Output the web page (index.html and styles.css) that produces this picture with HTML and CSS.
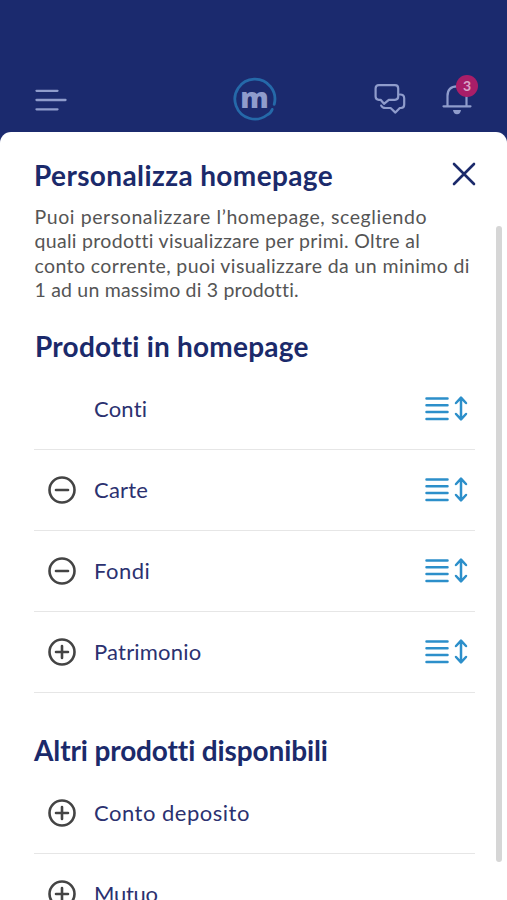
FILE: index.html
```
<!DOCTYPE html>
<html lang="it">
<head>
  <meta charset="UTF-8">
  <meta name="viewport" content="width=device-width, initial-scale=1.0">
  <title>Personalizza homepage</title>
  <link rel="stylesheet" href="styles.css">
</head>
<body>
  <!-- Shared icons -->
  <svg class="icon-defs" aria-hidden="true">
    <symbol id="minus" viewBox="0 0 28 28">
      <circle cx="14" cy="14" r="12.5"/>
      <path d="M8 14h12"/>
    </symbol>
    <symbol id="plus" viewBox="0 0 28 28">
      <circle cx="14" cy="14" r="12.5"/>
      <path d="M8 14h12M14 8v12"/>
    </symbol>
    <symbol id="drag" viewBox="0 0 44 28">
      <path d="M1.5 3.5h21M1.5 10.3h21M1.5 17.1h21M1.5 23.9h21"/>
      <path d="M36 3v21M31 8l5-5.3 5 5.3M31 19l5 5.3 5-5.3"/>
    </symbol>
  </svg>

  <header class="topbar">
    <button class="icon-btn" aria-label="Menu">
      <svg class="menu-icon" viewBox="0 0 32 24">
        <path d="M1.5 2.8h21M1.5 12h29M1.5 21.3h21"/>
      </svg>
    </button>
    <div class="logo">
      <svg class="logo-ring" viewBox="0 0 44 44">
        <path d="M41.2 27.3A20 20 0 1 0 34 38Q37.6 36.5 39.2 32.4"/>
      </svg>
      <span class="logo-letter">m</span>
    </div>
    <div class="actions">
      <button class="icon-btn" aria-label="Messaggi">
        <svg class="chat-icon" viewBox="0 0 32 32">
          <path d="M4.8 2.2H21Q24.2 2.2 24.2 5.4V13.6Q24.2 16.8 21 16.8H14.8L10 20.8 6.6 16.8H4.8Q1.6 16.8 1.6 13.6V5.4Q1.6 2.2 4.8 2.2Z"/>
          <path d="M25.8 11.5Q30.2 11.3 30.2 15.2V21.6Q30.2 25 27 25H25.8L21.4 29.6 16.6 25H11.5Q8.2 25 7.2 22.6"/>
        </svg>
      </button>
      <button class="icon-btn bell" aria-label="Notifiche">
        <svg class="bell-icon" viewBox="0 0 30 32">
          <path d="M1.5 23.3h27M5.5 23v-10Q5.5 3.4 15 3.4T24.5 13v10"/>
          <path class="clapper" d="M11 27h8q-.6 4.2-4 4.2T11 27Z"/>
        </svg>
        <span class="badge">3</span>
      </button>
    </div>
  </header>

  <main class="sheet">
    <div class="content">
      <div class="title-row">
        <h1>Personalizza homepage</h1>
        <button class="icon-btn" aria-label="Chiudi">
          <svg class="close-icon" viewBox="0 0 24 24">
            <path d="M2 2l20 20M22 2L2 22"/>
          </svg>
        </button>
      </div>
      <p class="intro">
        <span class="line line-1">Puoi personalizzare l’homepage, scegliendo</span>
        <span class="line line-2">quali prodotti visualizzare per primi. Oltre al</span>
        <span class="line line-3">conto corrente, puoi visualizzare da un minimo di</span>
        <span class="line line-4">1 ad un massimo di 3 prodotti.</span>
      </p>

      <h2 class="home-title">Prodotti in homepage</h2>
      <ul class="products">
        <li>
          <span class="toggle"></span>
          <span class="name">Conti</span>
          <svg class="drag"><use href="#drag"/></svg>
        </li>
        <li>
          <svg class="toggle"><use href="#minus"/></svg>
          <span class="name">Carte</span>
          <svg class="drag"><use href="#drag"/></svg>
        </li>
        <li>
          <svg class="toggle"><use href="#minus"/></svg>
          <span class="name name-wide">Fondi</span>
          <svg class="drag"><use href="#drag"/></svg>
        </li>
        <li>
          <svg class="toggle"><use href="#plus"/></svg>
          <span class="name">Patrimonio</span>
          <svg class="drag"><use href="#drag"/></svg>
        </li>
      </ul>

      <h2 class="other-title">Altri prodotti disponibili</h2>
      <ul class="products">
        <li>
          <svg class="toggle"><use href="#plus"/></svg>
          <span class="name name-wide">Conto deposito</span>
        </li>
        <li>
          <svg class="toggle"><use href="#plus"/></svg>
          <span class="name name-tight">Mutuo</span>
        </li>
      </ul>
    </div>
    <div class="scrollbar"></div>
  </main>
</body>
</html>
```
FILE: styles.css
```
* {
  box-sizing: border-box;
}

body {
  margin: 0;
  height: 900px;
  overflow: hidden;
  background: #1b2a6e;
  font-family: Lato, "Open Sans", sans-serif;
  color: #1b2a6b;
}

h1, h2, p, ul {
  margin: 0;
  padding: 0;
}

svg {
  display: block;
  fill: none;
  stroke-linecap: round;
  stroke-linejoin: round;
}

.icon-defs {
  position: absolute;
  width: 0;
  height: 0;
}

.icon-btn {
  display: block;
  padding: 0;
  border: none;
  background: none;
}

/* Top bar */
.topbar {
  display: grid;
  grid-template-columns: 1fr 44px 1fr;
  align-items: center;
  height: 132px;
  padding: 66px 34px 0 36px;
}

.topbar svg {
  stroke: #8f9ccc;
}

.topbar .menu-icon {
  width: 32px;
  height: 24px;
  margin: 2px 0 0 -1px;
  stroke-width: 2.3;
}

.logo {
  display: grid;
  place-items: center;
  width: 44px;
  height: 44px;
}

.logo > * {
  grid-area: 1 / 1;
}

.topbar .logo-ring {
  width: 44px;
  height: 44px;
  stroke: #2569a9;
  stroke-width: 2.8;
}

.logo-letter {
  margin-top: -5px;
  font-family: "Open Sans", sans-serif;
  font-size: 28.5px;
  font-weight: 800;
  line-height: 36px;
  color: #8f9ccc;
}

.actions {
  display: flex;
  justify-content: flex-end;
  gap: 36px;
  margin-right: 1px;
}

.chat-icon {
  width: 32px;
  height: 32px;
  stroke-width: 2.2;
}

.bell {
  position: relative;
}

.bell-icon {
  width: 30px;
  height: 32px;
  stroke-width: 2.2;
}

.bell-icon .clapper {
  fill: #8f9ccc;
  stroke: none;
}

.badge {
  position: absolute;
  top: -8px;
  right: -6px;
  width: 22px;
  height: 22px;
  border-radius: 50%;
  background: #a91e68;
  color: #d9a5c8;
  font-family: Lato, sans-serif;
  font-size: 14px;
  font-weight: 700;
  line-height: 22px;
  text-align: center;
}

/* Bottom sheet */
.sheet {
  display: flex;
  justify-content: space-between;
  height: 768px;
  padding: 0 5px 0 34px;
  overflow: hidden;
  border-radius: 11px 11px 0 0;
  background: #fff;
}

.content {
  width: 441px;
}

.title-row {
  display: flex;
  align-items: center;
  justify-content: space-between;
  height: 44px;
  margin-top: 20px;
}

h1, h2 {
  font-size: 28px;
  font-weight: 700;
  line-height: 36px;
  white-space: nowrap;
}

h1 {
  margin-top: 2px;
  letter-spacing: 0.38px;
}

.close-icon {
  width: 24px;
  height: 24px;
  margin: -1px -1px 0 0;
  stroke: #1b2a6b;
  stroke-width: 2.6;
}

.intro {
  margin-top: 9px;
  padding-left: 0.5px;
  font-size: 19.5px;
  line-height: 24.4px;
  color: #555;
}

.line {
  display: block;
  white-space: nowrap;
}

.line-1 {
  letter-spacing: 0.59px;
}

.line-2 {
  letter-spacing: 0.31px;
}

.line-3 {
  letter-spacing: 0.39px;
}

.line-4 {
  letter-spacing: 0.19px;
}

.home-title {
  margin-top: 25px;
  padding-left: 1px;
  letter-spacing: 0.22px;
}

.other-title {
  margin-top: 39px;
  letter-spacing: -0.12px;
}

.products {
  padding-top: 5px;
  list-style: none;
}

.products li {
  display: flex;
  align-items: center;
  height: 81px;
  padding: 0 6px 0 14px;
  border-bottom: 1.5px solid #e6e6e6;
}

.toggle {
  width: 28px;
  height: 28px;
  margin-right: 18px;
  stroke: #444;
  stroke-width: 2.6;
}

.name {
  font-size: 22px;
  line-height: 30px;
  letter-spacing: 0.2px;
  color: #2b3170;
}

.name-wide {
  letter-spacing: 0.5px;
}

.name-tight {
  letter-spacing: -0.3px;
}

.drag {
  width: 44px;
  height: 28px;
  margin-left: auto;
  stroke: #2c8fca;
  stroke-width: 2.5;
}

.scrollbar {
  width: 6px;
  height: 636px;
  margin-top: 94px;
  border-radius: 3px;
  background: #d6d6d6;
}
```
